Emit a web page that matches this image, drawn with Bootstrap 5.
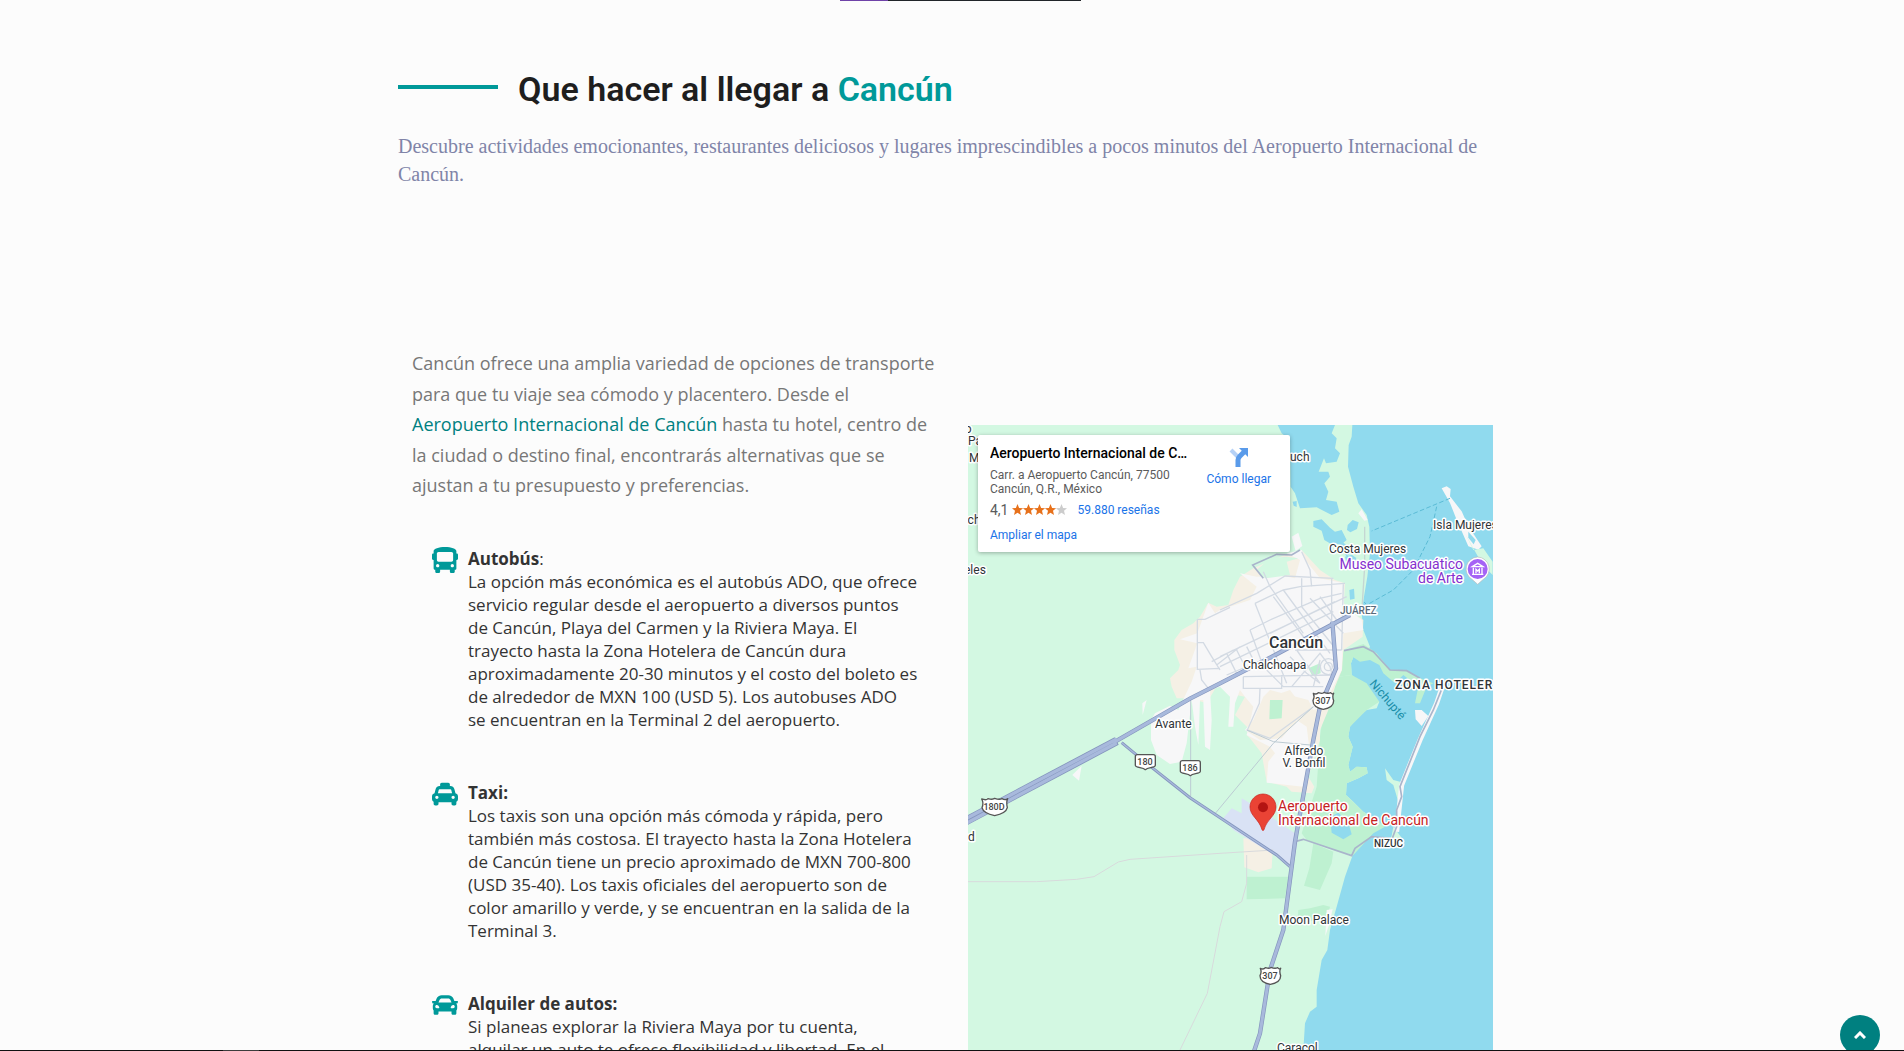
<!DOCTYPE html>
<html lang="es">
<head>
<meta charset="utf-8">
<meta name="viewport" content="width=device-width, initial-scale=1">
<title>Que hacer al llegar a Cancún</title>
<link href="https://cdn.jsdelivr.net/npm/bootstrap@5.3.0/dist/css/bootstrap.min.css" rel="stylesheet">
<style>
:root{--teal:#009999;--teal-dark:#008080}
body{background:#fcfcfc;color:#333;font-family:"Open Sans","Noto Sans",sans-serif;height:100vh;overflow:hidden}
.top-strip{height:1px;width:241px;margin-left:840px;background:#212529}
.top-strip span{width:48px;background:#6f42a8}
.guide{max-width:1108px;padding-top:67px}
.guide-head{gap:20px}
.guide-title{font:600 34px/42px Roboto,sans-serif;color:#1e1e1e}
.title-line{width:100px;height:4px;background:var(--teal);margin-bottom:4px}
.teal{color:var(--teal)}
.guide-sub{font:20px/28px "Liberation Serif",serif;color:#8084a8;margin-top:22px}
.guide-body{margin-top:160px}
.intro{font-size:18px;line-height:1.7;color:#777}
.intro a{color:var(--teal-dark)}
.transport{font-size:17px;line-height:23px;margin-top:46px;padding:0 20px}
.transport li{gap:10px;margin-bottom:50px}
.transport svg{width:26px;height:26px;fill:var(--teal)}
.col-text{padding:0 14px}
.col-map{padding:77px 13px 0 16px}
.map-box{height:640px;background:#d3f8e2;font-family:Roboto,sans-serif}
.map-box>svg{width:100%;height:100%}
.place-card{left:10px;top:10px;width:312px;height:117px;padding:10px 12px;background:#fff;border-radius:2px;box-shadow:0 1px 4px rgba(0,0,0,.3);font-size:12px;line-height:14px;color:#5b5b5b}
.place-card a{color:#1a73e8;text-decoration:none}
.place-name{font-size:14px;line-height:16px;font-weight:500;color:#000;width:200px}
.place-addr{margin-top:7px}
.place-rating{margin-top:6px}
.place-rating svg{margin:0 11px 0 3px}
.place-more{margin-top:10px}
.place-rate{font-size:14px;line-height:16px}
.place-go{margin-right:7px}
.place-go svg{margin:2px auto 5px}
.lbl{font-family:Roboto,sans-serif;font-size:12px;fill:#2f3437;stroke:#fff;stroke-width:3px;stroke-linejoin:round;paint-order:stroke}
.lbl-area{font-weight:500;font-size:10px}
.lbl-zone{font-weight:500;letter-spacing:1px}
.lbl-soft{fill:#5a6b7a}
.lbl-city{font-weight:500;font-size:16px}
.lbl-poi{font-size:14px;fill:#8430ce}
.lbl-pin{font-size:14px;fill:#c5221f}
.lbl-water{font-family:Roboto,sans-serif;font-size:12px;fill:#1a8ea8}
.lbl-road{font-family:Roboto,sans-serif;font-size:9px;font-weight:500;fill:#444;text-anchor:middle}
.to-top{right:24px;bottom:-4px;width:40px;height:40px;background:var(--teal-dark);z-index:5}
.bottom-edge{height:1px;background:#111;z-index:6}
.bottom-edge span{width:36px;margin-left:223px;background:#3c3c3c}
</style>
</head>
<body>
<div class="top-strip d-flex"><span></span></div>
<main class="guide mx-auto">
  <header>
    <div class="guide-head d-flex align-items-center">
      <span class="title-line"></span>
      <h2 class="guide-title mb-0">Que hacer al llegar a <span class="teal">Cancún</span></h2>
    </div>
    <p class="guide-sub mb-0">Descubre actividades emocionantes, restaurantes deliciosos y lugares imprescindibles a pocos minutos del Aeropuerto Internacional de Cancún.</p>
  </header>
  <div class="row g-0 guide-body">
    <section class="col-6 col-text">
      <p class="intro mb-0">Cancún ofrece una amplia variedad de opciones de transporte para que tu viaje sea cómodo y placentero. Desde el <a href="#" class="text-decoration-none">Aeropuerto Internacional de Cancún</a> hasta tu hotel, centro de la ciudad o destino final, encontrarás alternativas que se ajustan a tu presupuesto y preferencias.</p>
      <ul class="transport list-unstyled">
        <li class="d-flex"><svg class="flex-shrink-0" viewBox="0 0 512 512"><path d="M488 128h-8V80c0-44.8-99.2-80-224-80S32 35.2 32 80v48h-8c-13.25 0-24 10.74-24 24v80c0 13.25 10.75 24 24 24h8v160c0 17.67 14.33 32 32 32v32c0 17.67 14.33 32 32 32h32c17.67 0 32-14.33 32-32v-32h192v32c0 17.67 14.33 32 32 32h32c17.67 0 32-14.33 32-32v-32h6.4c16 0 25.6-12.8 25.6-25.6V256h8c13.25 0 24-10.75 24-24v-80c0-13.26-10.75-24-24-24zM112 400c-17.67 0-32-14.33-32-32s14.33-32 32-32 32 14.33 32 32-14.33 32-32 32zm16-112c-17.67 0-32-14.33-32-32V128c0-17.67 14.33-32 32-32h256c17.67 0 32 14.33 32 32v128c0 17.67-14.33 32-32 32H128zm272 112c-17.67 0-32-14.33-32-32s14.33-32 32-32 32 14.33 32 32-14.33 32-32 32z"/></svg>
          <div><strong>Autobús</strong>:<br>La opción más económica es el autobús ADO, que ofrece servicio regular desde el aeropuerto a diversos puntos de Cancún, Playa del Carmen y la Riviera Maya. El trayecto hasta la Zona Hotelera de Cancún dura aproximadamente 20-30 minutos y el costo del boleto es de alrededor de MXN 100 (USD 5). Los autobuses ADO se encuentran en la Terminal 2 del aeropuerto.</div></li>
        <li class="d-flex"><svg class="flex-shrink-0" viewBox="0 0 512 512"><path d="M462 241.64l-22-84.84c-9.6-35.2-41.6-60.8-76.8-60.8H352V64c0-17.67-14.33-32-32-32H192c-17.67 0-32 14.33-32 32v32h-11.2c-35.2 0-67.2 25.6-76.8 60.8l-22 84.84C21.41 248.04 0 273.47 0 304v48c0 23.63 12.95 44.04 32 55.12V448c0 17.67 14.33 32 32 32h32c17.67 0 32-14.33 32-32v-32h256v32c0 17.67 14.33 32 32 32h32c17.67 0 32-14.33 32-32v-40.88c19.05-11.09 32-31.5 32-55.12v-48c0-30.53-21.41-55.96-50-62.36zM96 352c-17.67 0-32-14.33-32-32s14.33-32 32-32 32 14.33 32 32-14.33 32-32 32zm20.55-112l17.2-66.36c2.23-8.16 9.59-13.64 15.06-13.64h214.4c5.47 0 12.83 5.48 14.85 12.86L395.45 240h-278.9zM416 352c-17.67 0-32-14.33-32-32s14.33-32 32-32 32 14.33 32 32-14.33 32-32 32z"/></svg>
          <div><strong>Taxi:</strong><br>Los taxis son una opción más cómoda y rápida, pero también más costosa. El trayecto hasta la Zona Hotelera de Cancún tiene un precio aproximado de MXN 700-800 (USD 35-40). Los taxis oficiales del aeropuerto son de color amarillo y verde, y se encuentran en la salida de la Terminal 3.</div></li>
        <li class="d-flex"><svg class="flex-shrink-0" viewBox="0 0 512 512"><path d="M499.99 176h-59.87l-16.64-41.6C406.38 91.63 365.57 64 319.5 64h-127c-46.06 0-86.88 27.63-103.99 70.4L71.87 176H12.01C4.2 176-1.53 183.34.37 190.91l6 24C7.7 220.25 12.5 224 18.01 224h20.07C24.65 235.73 16 252.78 16 272v48c0 16.12 6.16 30.67 16 41.93V416c0 17.67 14.33 32 32 32h32c17.67 0 32-14.33 32-32v-32h256v32c0 17.67 14.33 32 32 32h32c17.67 0 32-14.33 32-32v-54.07c9.84-11.25 16-25.8 16-41.93v-48c0-19.22-8.65-36.27-22.07-48H494c5.51 0 10.31-3.75 11.64-9.09l6-24c1.89-7.57-3.84-14.91-11.65-14.91zm-352.06-17.83c7.29-18.22 24.94-30.17 44.57-30.17h127c19.63 0 37.28 11.95 44.57 30.17L384 208H128l19.93-49.83zM96 319.8c-19.2 0-32-12.76-32-31.9S76.8 256 96 256s48 28.71 48 47.85-28.8 15.95-48 15.95zm320 0c-19.2 0-48 3.19-48-15.95S396.8 256 416 256s32 12.76 32 31.9-12.8 31.9-32 31.9z"/></svg>
          <div><strong>Alquiler de autos:</strong><br>Si planeas explorar la Riviera Maya por tu cuenta,<br>alquilar un auto te ofrece flexibilidad y libertad. En el</div></li>
      </ul>
    </section>
    <section class="col-6 col-map">
      <div class="map-box position-relative overflow-hidden">
        <svg class="d-block" viewBox="968 425 525 640" preserveAspectRatio="xMinYMin slice" role="img" aria-label="Mapa de Cancún">
          <g transform="translate(1220 420) scale(.33333)">
            <!-- sea and lagoons -->
            <g fill="#90daee">
              <path d="M397 15L395 50 386 75 384 140 400 200 415 250 440 285 448 320 450 400 442 470 432 530 425 580 430 630 450 680 440 700 400 710 393 730 395 765 420 790 410 815 440 818 478 845 470 865 440 870 415 890 390 920 385 950 398 980 385 1035 390 1055 410 1040 440 1042 443 1060 415 1075 380 1090 378 1125 400 1145 430 1175 470 1200 465 1230 400 1300 375 1370 350 1460 330 1530 322 1590 305 1620 290 1710 290 1760 270 1775 255 1810 250 1890 240 1990H830V15Z"/>
              <path d="M173 15L345 15 335 40 350 55 345 85 360 100 350 125 318 130 312 115 296 155 325 155 330 170 313 190 325 215 318 240 350 245 358 275 335 285 290 262 240 265 225 220 212 200 210 60 185 40Z"/>
              <path d="M280 303l25-5 25 25 15 12 20-5 15 30-10 8 30 22-20 20-22-38-25 0-20-12-8-28-25-12zM383 315l15-15 18 7-5 20-20 10-10-7zM218 245l12-2 0 18-9-4zM388 510l14-4 2 30-14 3zM375 410l20-6 14 10-10 30-16-6z"/>
            </g>
            <!-- vegetation and mangrove -->
            <g fill="#bef1d1">
              <path d="M370 692L430 672 470 700 510 750 560 752 600 775 640 790 620 800 600 850 585 850 595 800 550 765 525 790 490 760 478 735 450 720 420 725 400 712 393 730 395 765 355 770 365 730Z"/>
              <path d="M355 770L395 765 440 790 478 845 440 870 390 920 385 950 398 980 385 1035 390 1055 410 1040 440 1042 443 1060 415 1075 380 1090 378 1125 430 1175 470 1200 495 1220 460 1240 400 1305 340 1290 260 1260 245 1240 290 1100 300 950 310 880 330 840Z"/>
              <path d="M280 1270L340 1295 335 1330 300 1410 252 1397 268 1345ZM80 1370H205L195 1435 80 1438ZM235 1470l35-5 40-10 20 5-12 45-85-5z"/>
            </g>
            <path fill="#90daee" d="M330 1190l25-12 30 30 10 35-25 15-35-20z"/>
            <!-- developed areas -->
            <path fill="#f5f0e5" d="M-35 548L-10 560 25 555 40 510 60 470 100 445 200 402 245 390 300 450 345 480 375 490 372 550 400 580 430 600 428 650 370 690 366 750 345 800 325 870 300 930 300 960 265 1070 283 1100 275 1120 215 1115 200 1100 140 1085 125 1000 90 955 80 945 85 925 45 885 75 830 20 820-5 790-40 850-90 835-130 835-145 800-150 775-125 750-120 735-137 690-137 660-115 630-80 610-60 590Z"/>
            <path fill="#f7f7f8" d="M-35 548L-15 580 0 570 90 540 110 500 60 460 110 470 190 468 225 475 240 420 200 400 245 390 260 425 300 475 372 490 372 570 400 580 425 600 430 630 370 640 365 750 345 790 310 860 280 870 265 840 150 810 130 830 100 900 75 930 120 960 185 955 230 900 260 920 270 1000 250 1100 140 1088 145 1025 165 1000 150 980 80 945 85 930 100 860 75 830 60 810 45 850 40 920 25 920 30 830 0 800-30 810-25 900-30 990-45 980-50 840-60 840-65 975-75 920-85 840-100 970-115 1025-150 1032-190 1005-207 960-207 900-195 880-150 857-125 870-85 785-70 740-95 745-68 670-120 658-68 640Z"/>
            <path fill="#d3f8e2" d="M110 450l40-35 50-5 35 5-35 10 10 40-75 10z"/>
            <path fill="#f5f0e5" d="M150 830l60-20 30 40-12 60-50 40-40-20z"/><path fill="#bef1d1" d="M150 840h38l-3 55-37 3zM265 745l35-15 2 30-25 8z"/>
            <path fill="#f5f0e5" d="M70 1255h90l-5 90-40 12-42-15z"/>
            <path fill="#d9e2f5" d="M10 1195l25-30 30 15 0-45 60 35 70 50 30 20 10 15-15 85-180-110z"/>
            <path fill="#f7f7f8" d="M215 350l20-12 12 40-20 15zM415 280l10-12 18 32-10 2zM665 205l15-6 12 8-2 22 35 45 20 45 40 60-10 10-30-10-35-80-20-50zM320 1470l18-2-12 50-10 30zM585 870l20 0 20 18-20 30-18-20zM-233 850l13-10-12 45zM-443 1065l28-28-8 45z"/>
            <path fill="#d3f8e2" d="M735 340l25 50 30-5 28 40 0 40-30-30zM495 1045l25 35 20 5-5 60-15-50-20-15zM520 1220l30 40-15 25-30-8 10-30z"/>
            <path fill="#90daee" d="M745 335l22 25-6 13-16-20z"/>
            <path d="M672 785L650 850 600 960 545 1095 530 1235" fill="none" stroke="#f7f7f8" stroke-width="15"/>
            <path d="M434 320V440L425 580" fill="none" stroke="#c5d6d3" stroke-width="4"/>
            <!-- streets -->
            <g fill="none" stroke="#d3dae3" stroke-width="4">
              <path d="M0 570L110 520 195 468 340 475M105 550L190 510 240 500 375 490M105 550L200 790M150 640L345 545M90 630L150 600 300 535 365 520M0 710L380 530M0 740L340 575M20 765L200 690 370 590M190 510L330 700M160 530L280 690M245 475V560L350 690M270 535L370 640M300 530L350 600M335 475V600M370 490L365 690M130 455L150 500 250 640M245 395L270 450 275 500M90 630L130 740 190 800H310M70 770V805H185V765M70 770L340 765M20 700L50 760M50 690L80 750M80 680L110 740M120 805L118 850 82 930 150 955 280 860M210 710L260 760 300 790M230 690L300 790M225 690L365 690M300 720L280 800M215 800L300 700 330 740 340 780M-68 598V748L0 745M-68 598H-45L30 562M-68 668H-50L-25 710 0 750M-60 750l5 30 20 25M-10 735L60 680M-25 725L40 690"/>
              <circle cx="325" cy="740" r="24"/><circle cx="325" cy="740" r="12"/>
            </g>
            <g fill="none" stroke="#bccbd3" stroke-width="3">
              <path d="M-88 840V1130M-14 1180L160 970 280 860M80 930L160 965 270 975"/>
              <path stroke="#d8dadc" d="M-756 1385H-550L-430 1378-378 1370-305 1326-270 1318 0 1300 160 1290M80 1305V1390L65 1445 12 1475 0 1520-38 1720-120 1890"/>
            </g>
            <g fill="none" stroke="#a9b5cb" stroke-width="5">
              <path d="M130 475L98 435 170 403 215 405 240 390M372 692L430 680 460 695 510 750 560 752 600 775M672 790L640 870 600 950 540 1100 545 1130 530 1170V1220L515 1260M225 1265L250 1258 395 1307 405 1285 455 1250 510 1255"/>
            </g>
            <path d="M690 235L455 333M650 260L630 350 580 450 520 510 440 555 430 543" fill="none" stroke="#5abbd5" stroke-width="3" stroke-dasharray="14 7"/>
            <!-- highways -->
            <g fill="none" stroke="#8495bd">
              <path stroke-width="26" d="M-762 1203L-310 963"/><path stroke-width="13" d="M-320 968L-90 836 0 790 160 708 390 585M337 605L348 745 300 860 280 960 225 1265 190 1530 150 1650 120 1840 90 1930"/><path stroke-width="9" d="M-295 968L-220 1030-90 1133 30 1213 170 1305 210 1340"/>
              <path stroke="#a8b9dc" stroke-width="10" d="M-762 1196L-310 957M-762 1210L-310 969"/><path stroke="#a8b9dc" stroke-width="9" d="M-320 968L-90 836 0 790 160 708 390 585M337 605L348 745 300 860 280 960 225 1265 190 1530 150 1650 120 1840 90 1930"/>
              <path stroke="#a8b9dc" stroke-width="4" d="M-295 968L-220 1030-90 1133 30 1213 170 1305 210 1340"/>
            </g>
            <!-- road shields -->
            <g fill="#fff" stroke="#555" stroke-width="4" stroke-linejoin="round">
              <path d="M280 820q10 5 15-2 15 4 17-1 12 5 20 1 5 6 9 2-5 8 0 22 0 20-31 26-31-6-31-26 6-12 1-22z"/>
              <path d="M121 1645q10 5 15-2 15 4 17-1 12 5 20 1 5 6 9 2-5 8 0 22 0 20-31 26-31-6-31-26 6-12 1-22z"/>
              <path d="M-715 1137q14 5 19-1 15 4 20-1 14 5 22 1 10 6 17 0-5 10-1 27-4 17-38 24-34-7-38-24 6-14-1-26z"/>
              <path d="M-254 1010q0-6 6-6h48q6 0 6 6v26q0 5-14 7-12 2-16 6-4-4-16-6-14-2-14-7zM-119 1028q0-6 6-6h48q6 0 6 6v26q0 5-14 7-12 2-16 6-4-4-16-6-14-2-14-7z"/>
            </g>
            <!-- museum marker -->
            <path d="M773 411a36 36 0 0 1 17 67l-17 15-17-15a36 36 0 0 1 17-67z" fill="#fff" stroke="#bbb" stroke-width="2"/>
            <circle cx="773" cy="447" r="30" fill="#a563f5"/>
            <path d="M757 440l16-10 16 10zM760 443v18M786 443v18M756 463h34M768 460v-12l5 5 5-5v12" fill="none" stroke="#fff" stroke-width="4"/>
            <!-- airport marker -->
            <path d="M129 1122c-22 0-39 18-39 39 0 27 27 36 36 68q3 6 6 0c9-32 36-41 36-68 0-21-17-39-39-39z" fill="#ea4335" stroke="#c5221f" stroke-width="2"/><circle cx="129" cy="1162" r="15" fill="#b31412"/>
          </g>
          <g class="lbl">
            <text x="961" y="433">to</text><text x="961" y="445">r Pa</text><text x="969" y="462">Mu</text><text x="961" y="524">uch</text><text x="964" y="574">eles</text><text x="968" y="841">d</text>
            <text x="1290" y="461">uch</text><text x="1433" y="529">Isla Mujeres</text><text x="1329" y="553">Costa Mujeres</text>
            <text x="1243" y="669">Chalchoapa</text><text x="1155" y="728">Avante</text>
            <text x="1304" y="755" text-anchor="middle">Alfredo</text><text x="1304" y="767" text-anchor="middle">V. Bonfil</text>
            <text x="1279" y="924">Moon Palace</text><text x="1277" y="1052">Caracol</text>
          </g>
          <text class="lbl lbl-area lbl-soft" x="1340" y="614">JUÁREZ</text><text class="lbl lbl-zone" x="1395" y="689">ZONA HOTELERA</text><text class="lbl lbl-area" x="1374" y="847">NIZUC</text>
          <text class="lbl lbl-city" x="1269" y="648">Cancún</text>
          <text class="lbl lbl-poi" x="1463" y="569" text-anchor="end">Museo Subacuático</text><text class="lbl lbl-poi" x="1463" y="583" text-anchor="end">de Arte</text>
          <text class="lbl lbl-pin" x="1278" y="811">Aeropuerto</text><text class="lbl lbl-pin" x="1278" y="825">Internacional de Cancún</text>
          <text class="lbl-water" transform="translate(1369 684) rotate(49)">Nichupté</text>
          <g class="lbl-road"><text x="1323" y="704">307</text><text x="1270" y="979">307</text><text x="1145" y="765">180</text><text x="1190" y="771">186</text><text x="994" y="810">180D</text></g>
        </svg>
        <div class="place-card position-absolute d-flex justify-content-between">
          <div>
            <div class="place-name text-truncate">Aeropuerto Internacional de Cancún</div>
            <div class="place-addr">Carr. a Aeropuerto Cancún, 77500<br>Cancún, Q.R., México</div>
            <div class="place-rating d-flex align-items-center"><span class="place-rate">4,1</span>
              <svg width="55" height="12" viewBox="0 0 55 12"><defs><path id="star" d="M5.500 0l1.600 3.900 4 .3-3.100 2.600 1 4.100-3.500-2.200-3.500 2.200 1-4.100L-.1 4.200l4-.3z"/></defs><g fill="#e7711b"><use href="#star"/><use href="#star" x="11"/><use href="#star" x="22"/><use href="#star" x="33"/></g><use href="#star" x="44" fill="#ccc"/></svg>
              <a href="#">59.880 reseñas</a></div>
            <a href="#" class="place-more d-block">Ampliar el mapa</a>
          </div>
          <a href="#" class="place-go text-center flex-shrink-0"><svg class="d-block" width="20" height="20" viewBox="0 0 20 20"><path d="M2 3l7 7" stroke="#b5d1f6" stroke-width="4"/><path d="M9 20v-7q0-2 2-4l4-4" fill="none" stroke="#5a9bea" stroke-width="5"/><path d="M10 1h9v9z" fill="#5a9bea"/></svg>Cómo llegar</a>
        </div>
      </div>
    </section>
  </div>
</main>
<button type="button" class="to-top btn rounded-circle position-fixed border-0 p-0 d-flex align-items-center justify-content-center" aria-label="Volver arriba"><svg width="12" height="8" viewBox="0 0 12 8"><path d="M1 7l5-5 5 5" fill="none" stroke="#fff" stroke-width="3"/></svg></button>
<div class="bottom-edge position-fixed bottom-0 start-0 end-0 d-flex"><span></span></div>
<script src="https://cdn.jsdelivr.net/npm/bootstrap@5.3.0/dist/js/bootstrap.bundle.min.js"></script>
</body>
</html>
